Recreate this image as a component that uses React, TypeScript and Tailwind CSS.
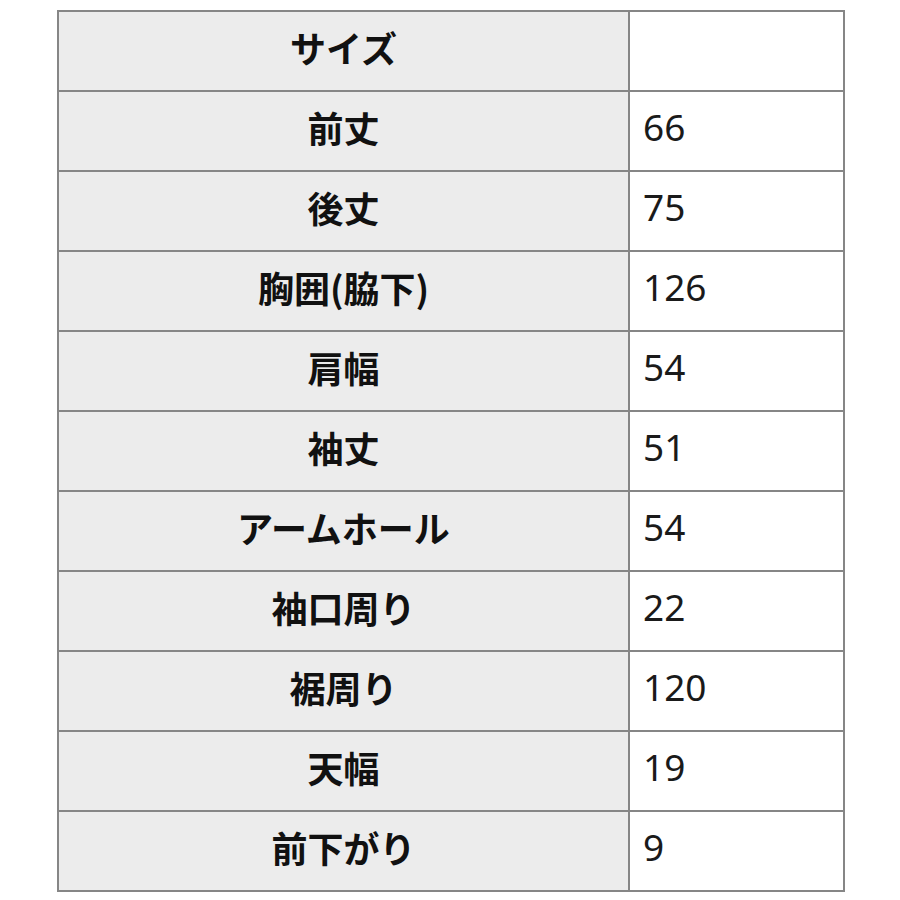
import React from "react";

const rows: [string, string][] = [
  ["サイズ", ""],
  ["前丈", "66"],
  ["後丈", "75"],
  ["胸囲(脇下)", "126"],
  ["肩幅", "54"],
  ["袖丈", "51"],
  ["アームホール", "54"],
  ["袖口周り", "22"],
  ["裾周り", "120"],
  ["天幅", "19"],
  ["前下がり", "9"],
];

export default function App() {
  return (
    <div className="w-[900px] h-[900px] bg-white overflow-hidden pt-[10px] pl-[57px]">
      <table className="border-collapse w-[786px] table-fixed">
        <colgroup>
          <col className="w-[571px]" />
          <col className="w-[215px]" />
        </colgroup>
        <tbody>
          {rows.map(([k, v]) => (
            <tr key={k} className="h-[80px]">
              <td
                className="border-2 border-[#868686] bg-[#ececec] text-center text-[36px] font-bold text-[#111] p-0 pb-[8px]"
                style={{ fontFamily: '"Noto Sans CJK JP", "Noto Sans", sans-serif' }}
              >
                {k}
              </td>
              <td
                className="border-2 border-[#868686] bg-white text-left text-[37px] text-[#1a1a1a] p-0 pl-[13px] pb-[8px]"
                style={{ fontFamily: '"Noto Sans", "Open Sans", sans-serif' }}
              >
                {v}
              </td>
            </tr>
          ))}
        </tbody>
      </table>
    </div>
  );
}
